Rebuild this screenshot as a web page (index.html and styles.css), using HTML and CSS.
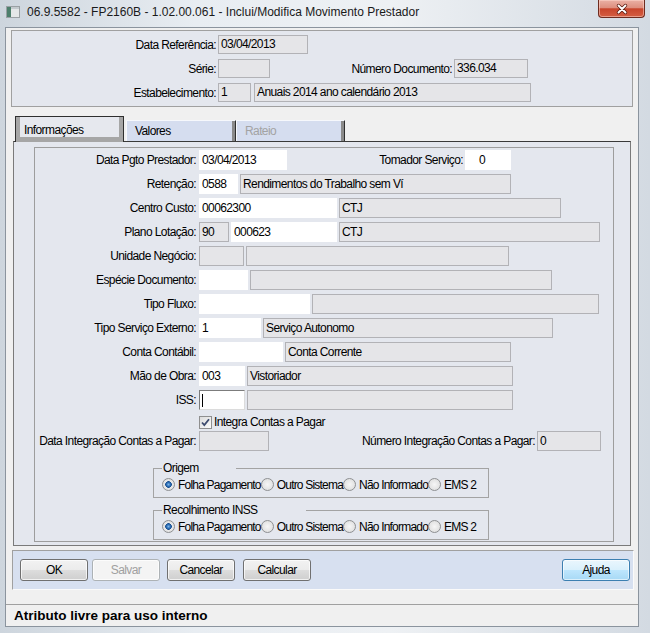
FILE: index.html
```html
<!DOCTYPE html>
<html lang="pt-BR">
<head>
<meta charset="utf-8">
<title>Inclui/Modifica Movimento Prestador</title>
<link rel="stylesheet" href="styles.css">
</head>
<body>
<div class="window">
  <div class="titlebar">
    <svg class="app-icon" width="14" height="12" viewBox="0 0 14 12">
      <rect x="0.5" y="0.5" width="13" height="11" fill="#e4e7e8" stroke="#9aa0a4"/>
      <rect x="1" y="1" width="4" height="10" fill="#4d7f6c"/>
      <rect x="5" y="1" width="8" height="2" fill="#c4cace"/>
    </svg>
    <span class="title">06.9.5582 - FP2160B - 1.02.00.061 - Inclui/Modifica Movimento Prestador</span>
    <div class="close-btn">
      <svg width="14" height="12" viewBox="0 0 14 12">
        <path d="M3.5 2.5 L10.5 9.5 M10.5 2.5 L3.5 9.5" stroke="#5a1a10" stroke-width="3.4" stroke-linecap="round"/>
        <path d="M3.5 2.5 L10.5 9.5 M10.5 2.5 L3.5 9.5" stroke="#ffffff" stroke-width="1.9" stroke-linecap="round"/>
      </svg>
    </div>
  </div>

  <div class="client">
    <div class="header-panel">
      <div class="hrow">
        <span class="hlabel">Data Referência:</span>
        <span class="fld ro w90">03/04/2013</span>
      </div>
      <div class="hrow">
        <span class="hlabel">Série:</span>
        <span class="fld ro w52"></span>
        <span class="lbl w182">Número Documento:</span>
        <span class="fld ro w74">336.034</span>
      </div>
      <div class="hrow">
        <span class="hlabel">Estabelecimento:</span>
        <span class="fld ro w33">1</span>
        <span class="fld ro w277 g3">Anuais 2014 ano calendário 2013</span>
      </div>
    </div>

    <div class="tabs">
      <div class="tabstrip">
        <div class="tab active">Informações</div>
        <div class="tab">Valores</div>
        <div class="tab disabled">Rateio</div>
      </div>
      <div class="tabpage">
        <div class="form">
          <div class="frow">
            <span class="flabel">Data Pgto Prestador:</span>
            <span class="fld wr w88">03/04/2013</span>
            <span class="lbl w176">Tomador Serviço:</span>
            <span class="fld wr w46 num">0</span>
          </div>
          <div class="frow">
            <span class="flabel">Retenção:</span>
            <span class="fld wr w39">0588</span>
            <span class="fld ro w271">Rendimentos do Trabalho sem Ví</span>
          </div>
          <div class="frow">
            <span class="flabel">Centro Custo:</span>
            <span class="fld wr w138">00062300</span>
            <span class="fld ro w222">CTJ</span>
          </div>
          <div class="frow">
            <span class="flabel">Plano Lotação:</span>
            <span class="fld ro w30">90</span>
            <span class="fld wr w106">000623</span>
            <span class="fld ro w261">CTJ</span>
          </div>
          <div class="frow">
            <span class="flabel">Unidade Negócio:</span>
            <span class="fld ro w45"></span>
            <span class="fld ro w263">&nbsp;</span>
          </div>
          <div class="frow">
            <span class="flabel">Espécie Documento:</span>
            <span class="fld wr w49"></span>
            <span class="fld ro w302"></span>
          </div>
          <div class="frow">
            <span class="flabel">Tipo Fluxo:</span>
            <span class="fld wr w111"></span>
            <span class="fld ro w287"></span>
          </div>
          <div class="frow">
            <span class="flabel">Tipo Serviço Externo:</span>
            <span class="fld wr w62">1</span>
            <span class="fld ro w290">Serviço Autonomo</span>
          </div>
          <div class="frow">
            <span class="flabel">Conta Contábil:</span>
            <span class="fld wr w84"></span>
            <span class="fld ro w226">Conta Corrente</span>
          </div>
          <div class="frow">
            <span class="flabel">Mão de Obra:</span>
            <span class="fld wr w46">003</span>
            <span class="fld ro w266">Vistoriador</span>
          </div>
          <div class="frow">
            <span class="flabel">ISS:</span>
            <span class="fld wr focus w46"><span class="caret"></span></span>
            <span class="fld ro w266"></span>
          </div>
          <div class="cbrow">
            <span class="checkbox">
              <svg width="11" height="11" viewBox="0 0 11 11"><path d="M2 5.5 L4.3 8 L9 2.2" fill="none" stroke="#3d4b6e" stroke-width="1.8"/></svg>
            </span>
            <span>Integra Contas a Pagar</span>
          </div>
          <div class="frow">
            <span class="flabel">Data Integração Contas a Pagar:</span>
            <span class="fld ro w70"></span>
            <span class="lbl w266">Número Integração Contas a Pagar:</span>
            <span class="fld ro w64">0</span>
          </div>

          <fieldset class="group">
            <legend class="leg-origem">Origem</legend>
            <div class="radios">
              <span class="opt"><span class="radio on"></span>Folha Pagamento</span>
              <span class="opt"><span class="radio"></span>Outro Sistema</span>
              <span class="opt"><span class="radio"></span>Não Informado</span>
              <span class="opt"><span class="radio"></span>EMS 2</span>
            </div>
          </fieldset>
          <fieldset class="group second">
            <legend class="leg-inss">Recolhimento INSS</legend>
            <div class="radios">
              <span class="opt"><span class="radio on"></span>Folha Pagamento</span>
              <span class="opt"><span class="radio"></span>Outro Sistema</span>
              <span class="opt"><span class="radio"></span>Não Informado</span>
              <span class="opt"><span class="radio"></span>EMS 2</span>
            </div>
          </fieldset>
        </div>
      </div>
    </div>

    <div class="buttonbar">
      <button class="btn">OK</button>
      <button class="btn disabled g4">Salvar</button>
      <button class="btn g7">Cancelar</button>
      <button class="btn g8">Calcular</button>
      <button class="btn default">Ajuda</button>
    </div>

    <div class="statusbar">Atributo livre para uso interno</div>
  </div>
</div>
</body>
</html>
```

FILE: styles.css
```css
* { box-sizing: border-box; }
html, body { margin: 0; padding: 0; }
body {
  width: 650px;
  height: 633px;
  overflow: hidden;
  background: linear-gradient(90deg, #cdd5dd 0, #e8edf2 30%, #eef1f4 60%, #d3dae2 100%);
  font-family: "Liberation Sans", Arial, sans-serif;
  font-size: 12px;
  letter-spacing: -0.6px;
  color: #000;
}
.window {
  width: 650px;
  height: 633px;
  display: flex;
  flex-direction: column;
}

/* title bar */
.titlebar {
  height: 27px;
  flex: none;
  display: flex;
  align-items: center;
  padding-bottom: 3px;
  font-size: 12px;
  letter-spacing: 0;
  color: #1a1a1a;
}
.app-icon { margin-left: 6px; flex: none; }
.title { margin-left: 7px; white-space: nowrap; }
.close-btn {
  margin-left: auto;
  margin-right: 5px;
  align-self: flex-start;
  width: 47px;
  height: 18px;
  border: 1px solid #6e2b1f;
  border-top: none;
  border-radius: 0 0 4px 4px;
  background: linear-gradient(#eab1a5 0%, #de8f7f 45%, #c8452c 52%, #d45e42 100%);
  box-shadow: inset 0 0 0 1px rgba(255, 220, 210, 0.5);
  display: flex;
  align-items: center;
  justify-content: center;
}

/* client area */
.client {
  margin-left: 5px;
  width: 634px;
  height: 600px;
  border: 1px solid #8b949e;
  background: #f0f0f0;
  display: flex;
  flex-direction: column;
}

.header-panel {
  margin: 2px 5px 0 5px;
  height: 77px;
  flex: none;
  border: 1px solid #a0a0a0;
  background: #e4e7ee;
  padding-top: 4px;
}
.hrow {
  display: flex;
  align-items: center;
  height: 19px;
  margin-bottom: 5px;
}
.hlabel {
  width: 204px;
  flex: none;
  text-align: right;
  margin-right: 2px;
}
.lbl {
  flex: none;
  text-align: right;
  white-space: nowrap;
}

/* fields */
.fld {
  flex: none;
  height: 19px;
  line-height: 17px;
  padding: 0 2px;
  white-space: nowrap;
  overflow: hidden;
  border: 1px solid transparent;
}
.frow .fld { height: 20px; line-height: 18px; }
.ro {
  background: #e5e5e8;
  border-color: #b2b2b6;
}
.wr {
  background: #fff;
  border-color: #fff;
}
.focus {
  border-color: #7c7c7c #dcdcdc #dcdcdc #7c7c7c;
  display: flex;
  align-items: center;
}
.caret {
  display: block;
  width: 1px;
  height: 13px;
  background: #000;
}
.num { padding-left: 13px; }
.fld + .fld { margin-left: 2px; }
.lbl + .fld { margin-left: 2px; }
.fld.g3 { margin-left: 3px; }

.w30 { width: 30px; } .w33 { width: 33px; } .w39 { width: 39px; }
.w45 { width: 45px; } .w46 { width: 46px; } .w49 { width: 49px; }
.w52 { width: 52px; } .w62 { width: 62px; } .w64 { width: 64px; }
.w70 { width: 70px; } .w74 { width: 74px; } .w84 { width: 84px; }
.w88 { width: 88px; } .w90 { width: 90px; } .w106 { width: 106px; }
.w111 { width: 111px; } .w138 { width: 138px; } .w176 { width: 176px; }
.w182 { width: 182px; } .w222 { width: 222px; } .w226 { width: 226px; }
.w261 { width: 261px; } .w263 { width: 263px; } .w266 { width: 266px; }
.w271 { width: 271px; } .w277 { width: 277px; } .w287 { width: 287px; }
.w290 { width: 290px; } .w302 { width: 302px; }

/* tabs */
.tabs {
  margin: 9px 7px 0 7px;
  flex: none;
}
.tabstrip {
  display: flex;
  align-items: flex-end;
  height: 25px;
  padding-left: 2px;
}
.tab {
  width: 110px;
  height: 21px;
  padding: 3px 0 0 8px;
  background: #d5ddef;
  border-top: 1px solid #f6f8fc;
  border-left: 1px solid #f6f8fc;
  border-right: 1px solid #2f2f2f;
  box-shadow: inset -3px 0 0 #8a8a8a;
  white-space: nowrap;
}
.tab.active {
  width: 109px;
  height: 26px;
  margin-bottom: -1px;
  margin-right: 2px;
  padding: 6px 0 0 8px;
  position: relative;
  z-index: 1;
  background: #e6e8ee;
  border: 1px solid #2f2f2f;
  border-bottom: none;
  box-shadow: inset -4px -5px 0 #a6a6a6, inset 4px 0 0 #a6a6a6;
}
.tab.disabled {
  width: 109px;
  color: #a3a3a3;
}
.tabpage {
  height: 405px;
  border: 1px solid #7a7a7a;
  border-top-color: #3a3a3a;
  background: #e4e7ee;
  padding: 5px 16px 0 20px;
}
.form {
  height: 395px;
  border: 1px solid #9d9d9d;
  background: #e4e7ee;
  padding-top: 2px;
}
.frow {
  display: flex;
  align-items: center;
  height: 20px;
  margin-bottom: 4px;
}
.flabel {
  width: 162px;
  flex: none;
  text-align: right;
  padding-right: 1px;
  margin-right: 2px;
  white-space: nowrap;
}
.cbrow {
  display: flex;
  align-items: center;
  height: 16px;
  margin-bottom: 1px;
  padding-left: 164px;
}
.checkbox {
  width: 13px;
  height: 13px;
  margin-right: 2px;
  border: 1px solid #8f8f8f;
  background: linear-gradient(135deg, #dcdcdc, #fbfbfb);
  display: flex;
  align-items: center;
  justify-content: center;
}

/* group boxes */
.group {
  margin: 10px 0 0 118px;
  width: 336px;
  min-width: 0;
  border: 1px solid #a3a3a3;
  padding: 1px 0 5px 8px;
}
.group.second { margin-top: 5px; }
.group legend {
  padding: 0 0 0 1px;
  line-height: 15px;
}
.leg-origem { width: 74px; }
.leg-inss { width: 144px; }
.radios {
  display: flex;
  align-items: center;
  height: 15px;
  letter-spacing: -0.8px;
}
.opt {
  display: flex;
  align-items: center;
  white-space: nowrap;
}
.radio {
  width: 13px;
  height: 13px;
  margin-right: 3px;
  border: 1px solid #8e9092;
  border-radius: 50%;
  background: radial-gradient(circle at 50% 50%, #f6f6f6 0, #e2e2e2 70%, #d2d2d2 100%);
}
.radio.on {
  background:
    radial-gradient(circle at 50% 50%, #7fb4e6 0, #2a6db5 2px, #1b4f8f 3px, transparent 3.6px),
    radial-gradient(circle at 50% 50%, #f6f6f6 0, #e2e2e2 70%, #d2d2d2 100%);
}

/* buttons */
.buttonbar {
  margin: 4px 4px 0 6px;
  height: 40px;
  flex: none;
  border: 1px solid #a0a0a0;
  border-right-color: #fafafa;
  border-bottom-color: #fafafa;
  background: #d7e0f0;
  display: flex;
  align-items: flex-start;
  padding: 8px 3px 0 7px;
}
.btn {
  width: 68px;
  height: 22px;
  padding: 0;
  border: 1px solid #707070;
  border-radius: 3px;
  background: linear-gradient(#f2f2f2 0%, #ebebeb 50%, #dddddd 50%, #cfcfcf 100%);
  box-shadow: inset 0 0 0 1px rgba(255, 255, 255, 0.7);
  font-family: inherit;
  font-size: 12px;
  letter-spacing: -0.6px;
  color: #000;
  display: flex;
  align-items: center;
  justify-content: center;
}
.btn.disabled {
  border-color: #adb2b5;
  background: #f4f4f4;
  color: #a0a0a0;
}
.btn.g4 { margin-left: 4px; }
.btn.g7 { margin-left: 7px; }
.btn.g8 { margin-left: 8px; }
.btn.default {
  margin-left: auto;
  border-color: #3c7fb1;
  background: linear-gradient(#eaf6fd 0%, #d9f0fc 50%, #bee6fd 50%, #a7d9f5 100%);
  box-shadow: inset 0 0 0 1px rgba(255, 255, 255, 0.6);
}

/* status bar */
.statusbar {
  margin-top: 14px;
  flex: 1;
  border-top: 1px solid #a0a0a0;
  padding-left: 8px;
  display: flex;
  align-items: center;
  font-weight: bold;
  font-size: 13.5px;
  letter-spacing: 0;
}
```
